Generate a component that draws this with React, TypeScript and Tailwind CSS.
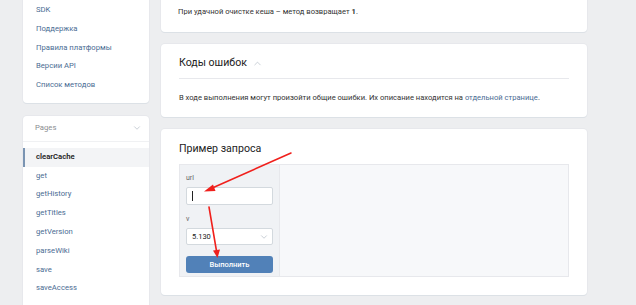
import { ChevronDown, ChevronUp } from 'lucide-react'

const topLinks = ['SDK', 'Поддержка', 'Правила платформы', 'Версии API', 'Список методов']
const pages = ['clearCache', 'get', 'getHistory', 'getTitles', 'getVersion', 'parseWiki', 'save', 'saveAccess']

function Card({ className, children }: { className?: string; children: React.ReactNode }) {
  return (
    <div className={`bg-white rounded-[4px] shadow-[0_1px_0_0_#dce1e6,0_0_0_1px_#e7e8ec] ${className ?? ''}`}>
      {children}
    </div>
  )
}

export default function App() {
  return (
    <div
      className="relative h-[305px] w-[636px] overflow-hidden bg-[#edeef0]"
      style={{ fontFamily: 'Roboto, "Open Sans", sans-serif' }}
    >
      <div className="flex gap-3 pl-[23px]">
        {/* Sidebar */}
        <div className="flex w-[126px] flex-col gap-[13px]">
          <Card className="rounded-t-none pt-px pb-2">
            {topLinks.map((label) => (
              <div key={label} className="h-[18.75px] pl-[13px] text-[7.7px] leading-[18.75px] text-[#4a6c93]">
                {label}
              </div>
            ))}
          </Card>

          <Card className="h-[200px] rounded-b-none">
            <div className="flex h-[26px] items-center justify-between border-b border-[#f0f1f3] pl-3 pr-[7px]">
              <span className="text-[7.7px] text-[#8a8d91]">Pages</span>
              <ChevronDown className="h-[10px] w-[10px] text-[#a9b2bd]" strokeWidth={1.5} />
            </div>
            <div className="pt-[6px]">
              {pages.map((p, i) => (
                <div
                  key={p}
                  className={
                    i === 0
                      ? 'h-[18.8px] border-l-2 border-[#7a94b2] bg-[#f3f4f6] pl-[11px] text-[7.7px] font-semibold leading-[18.8px] text-[#222]'
                      : 'h-[18.8px] pl-[13px] text-[7.7px] leading-[18.8px] text-[#4a6c93]'
                  }
                >
                  {p}
                </div>
              ))}
            </div>
          </Card>
        </div>

        {/* Main */}
        <div className="flex w-[426px] flex-col gap-3">
          <Card className="rounded-t-none px-[17px] pt-[6px] pb-[14px]">
            <p className="text-[7.6px] leading-[12px] text-[#333]">
              При удачной очистке кеша – метод возвращает <b>1</b>.
            </p>
          </Card>

          <Card className="px-[18px] pt-[10px] pb-[13px]">
            <div className="flex items-center gap-[5px] border-b border-[#e7e8ec] pb-[6px]">
              <span className="text-[10.6px] leading-[18px] text-[#222]">Коды ошибок</span>
              <ChevronUp className="h-[11px] w-[11px] text-[#b3bcc6]" strokeWidth={1.5} />
            </div>
            <p className="mt-[13px] text-[7.6px] leading-[12px] text-[#333]">
              В ходе выполнения могут произойти общие ошибки. Их описание находится на{' '}
              <span className="text-[#4a6c93]">отдельной странице</span>.
            </p>
          </Card>

          <Card className="h-[166px] px-[18px] pt-[11px]">
            <div className="text-[10.6px] leading-[18px] text-[#222]">Пример запроса</div>
            <div className="mt-[6px] flex h-[113px] border border-[#e7e8ec] bg-[#f7f8fa]">
              <div className="w-[100px] border-r border-[#e7e8ec] bg-[#f0f2f5] px-[6px] pt-[8px]">
                <div className="text-[7px] leading-[10px] text-[#656565]">url</div>
                <div className="relative mt-[4px] h-[18px] rounded-[2px] border border-[#d3d9de] bg-white">
                  <span className="absolute left-[5px] top-[3px] h-[10px] w-px bg-[#222]" />
                </div>
                <div className="mt-[9px] text-[7px] leading-[10px] text-[#656565]">v</div>
                <div className="mt-[4px] flex h-[17px] items-center justify-between rounded-[2px] border border-[#d3d9de] bg-white pl-[5px] pr-[3px]">
                  <span className="text-[7.5px] text-[#222]">5.130</span>
                  <ChevronDown className="h-[10px] w-[10px] text-[#a9b2bd]" strokeWidth={1.5} />
                </div>
                <div className="mt-[11px] flex h-[17px] items-center justify-center rounded-[3px] bg-[#5181b8] text-[7.5px] font-medium text-white">
                  Выполнить
                </div>
              </div>
              <div className="flex-1" />
            </div>
          </Card>
        </div>
      </div>

      {/* annotation arrows */}
      <svg className="pointer-events-none absolute left-0 top-0" width="636" height="305">
        <g stroke="#f0201c" strokeWidth="1.6" fill="#f0201c" strokeLinecap="round">
          <line x1="291" y1="153" x2="210" y2="189" />
          <polygon points="204,191.5 213,184.5 215.5,191" stroke="none" />
          <line x1="209" y1="207" x2="216.5" y2="251" />
          <polygon points="217.5,258 213,250.5 220,249.5" stroke="none" />
        </g>
      </svg>
    </div>
  )
}
